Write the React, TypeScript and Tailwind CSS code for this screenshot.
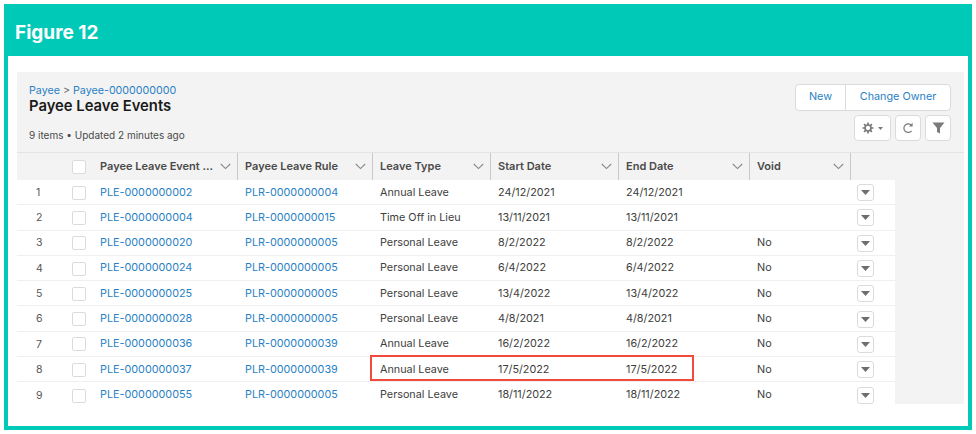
const rows = [
  ["PLE-0000000002", "PLR-0000000004", "Annual Leave", "24/12/2021", "24/12/2021", ""],
  ["PLE-0000000004", "PLR-0000000015", "Time Off in Lieu", "13/11/2021", "13/11/2021", ""],
  ["PLE-0000000020", "PLR-0000000005", "Personal Leave", "8/2/2022", "8/2/2022", "No"],
  ["PLE-0000000024", "PLR-0000000005", "Personal Leave", "6/4/2022", "6/4/2022", "No"],
  ["PLE-0000000025", "PLR-0000000005", "Personal Leave", "13/4/2022", "13/4/2022", "No"],
  ["PLE-0000000028", "PLR-0000000005", "Personal Leave", "4/8/2021", "4/8/2021", "No"],
  ["PLE-0000000036", "PLR-0000000039", "Annual Leave", "16/2/2022", "16/2/2022", "No"],
  ["PLE-0000000037", "PLR-0000000039", "Annual Leave", "17/5/2022", "17/5/2022", "No"],
  ["PLE-0000000055", "PLR-0000000005", "Personal Leave", "18/11/2022", "18/11/2022", "No"],
];

const heads = ["Payee Leave Event ...", "Payee Leave Rule", "Leave Type", "Start Date", "End Date", "Void"];
const head = "grid grid-cols-[76px_145px_135px_118px_128px_131px_101px_113px]";
const body = "grid grid-cols-[76px_145px_135px_118px_128px_131px_101px_45px]";

function Chevron() {
  return (
    <svg width="11" height="7" viewBox="0 0 11 7" fill="none" stroke="#8a8886" strokeWidth="1.1">
      <path d="M0.8 1 L5.5 5.6 L10.2 1" />
    </svg>
  );
}

function Box() {
  return <div className="w-[14px] h-[14px] rounded-[2px] bg-white border border-[#dddbda]" />;
}

export default function App() {
  return (
    <div className="w-[976px] h-[434px] bg-white p-1 font-['Inter','Liberation_Sans',sans-serif]">
      <div className="relative w-[968px] h-[426px] border-4 border-[#00c9b7] bg-white flex flex-col">
        <div className="h-[49px] -mt-px bg-[#00c9b7] flex items-center pl-[7px] pt-[3px] text-white font-bold text-[19px]">
          Figure 12
        </div>
        <div className="ml-[9px] mt-[16px] w-[947px] h-[332px] bg-[#f3f3f3] flex flex-col">
          <div className="h-[80px] flex justify-between pl-3 pr-[13px] pt-[12px] shrink-0">
            <div className="flex flex-col text-[10.7px] leading-[12px] pt-px">
              <div className="text-[#6b6b6b]">
                <span className="text-[#2a7fc4]">Payee</span> &gt; <span className="text-[#2a7fc4]">Payee-0000000000</span>
              </div>
              <div className="mt-[1px] text-[14.8px] leading-[17px] font-semibold text-[#1a1a1a]">Payee Leave Events</div>
              <div className="mt-[14px] text-[10px] text-[#4a4a4a]">9 items • Updated 2 minutes ago</div>
            </div>
            <div className="flex flex-col items-end gap-[4px]">
              <div className="flex h-[27px] bg-white border border-[#dddbda] rounded text-[10.8px] text-[#2a7fc4] items-center">
                <div className="w-[50px] h-full flex items-center justify-center border-r border-[#dddbda]">New</div>
                <div className="w-[104px] flex items-center justify-center">Change Owner</div>
              </div>
              <div className="flex gap-[4px]">
                <div className="w-[37px] h-[26px] bg-white border border-[#dddbda] rounded flex items-center justify-center gap-[4px]">
                  <svg width="12" height="12" viewBox="0 0 24 24" fill="none" stroke="#7a7a7a" strokeWidth="3.4">
                    <circle cx="12" cy="12" r="6" />
                    <path d="M12 1v5M12 18v5M1 12h5M18 12h5M4.2 4.2l3.6 3.6M16.2 16.2l3.6 3.6M19.8 4.2l-3.6 3.6M7.8 16.2l-3.6 3.6" />
                  </svg>
                  <svg width="5" height="3" viewBox="0 0 5 3" fill="#7a7a7a"><path d="M0 0h5L2.5 3z" /></svg>
                </div>
                <div className="w-[26px] h-[26px] bg-white border border-[#dddbda] rounded flex items-center justify-center">
                  <svg width="12" height="12" viewBox="0 0 12 12" fill="none" stroke="#7a7a7a" strokeWidth="1.2">
                    <path d="M9.6 8.8A4.3 4.3 0 1 1 9 2.9" />
                    <path d="M10.6 0.8V4.4H7z" fill="#7a7a7a" stroke="none" />
                  </svg>
                </div>
                <div className="w-[26px] h-[26px] bg-white border border-[#dddbda] rounded flex items-center justify-center">
                  <svg width="13" height="12" viewBox="0 0 13 12" fill="#7a7a7a">
                    <path d="M0.5 0.5h12L8 6v5.5L5 10V6z" />
                  </svg>
                </div>
              </div>
            </div>
          </div>
          <div className={head + " h-[28px] border-t border-[#e3e3e3] text-[11px] font-semibold text-[#4a4a4a] shrink-0"}>
            <div className="flex items-center justify-end pr-[7px]"><Box /></div>
            {heads.map((h) => (
              <div key={h} className="flex items-center justify-between pl-[7px] pr-[6px] border-r border-[#c9c9c9]">
                <span className="whitespace-nowrap">{h}</span>
                <Chevron />
              </div>
            ))}
            <div />
          </div>
          <div className="w-[878px] bg-white">
            {rows.map((r, i) => (
              <div key={r[0]} className={body + " h-[25.3px] pt-px border-b border-[#f0f0f0] text-[10.8px] text-[#3e3e3c] items-center last:border-b-0"}>
                <div className="flex items-center justify-between pl-[19px] pr-[7px]">
                  <span className="text-[#555] text-[10.5px]">{i + 1}</span>
                  <Box />
                </div>
                <div className="pl-[7px] text-[#2a7fc4]">{r[0]}</div>
                <div className="pl-[7px] text-[#2a7fc4]">{r[1]}</div>
                <div className="pl-[7px]">{r[2]}</div>
                <div className="pl-[7px]">{r[3]}</div>
                <div className="pl-[7px]">{r[4]}</div>
                <div className="pl-[7px]">{r[5]}</div>
                <div className="pl-[6px]">
                  <div className="w-[17px] h-[17px] bg-white border border-[#dddbda] rounded-[3px] flex items-center justify-center">
                    <svg width="9" height="5" viewBox="0 0 9 5" fill="#706e6b"><path d="M0 0h9L4.5 5z" /></svg>
                  </div>
                </div>
              </div>
            ))}
          </div>
        </div>
        <div className="absolute left-[362px] top-[347px] w-[324px] h-[26px] border-2 border-[#ef4a3c]" />
      </div>
    </div>
  );
}
